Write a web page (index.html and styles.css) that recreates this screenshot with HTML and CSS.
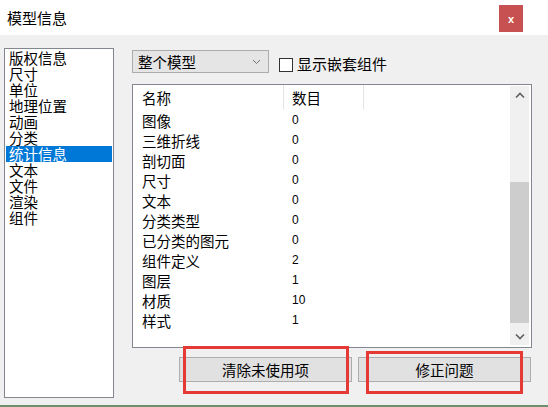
FILE: index.html
```html
<!DOCTYPE html>
<html>
<head>
<meta charset="utf-8">
<link rel="stylesheet" href="styles.css">
</head>
<body>
<div class="titlebar">
  <span class="title">模型信息</span>
  <span class="close">x</span>
</div>
<div class="main">
  <ul class="sidebar">
    <li>版权信息</li>
    <li>尺寸</li>
    <li>单位</li>
    <li>地理位置</li>
    <li>动画</li>
    <li>分类</li>
    <li class="selected">统计信息</li>
    <li>文本</li>
    <li>文件</li>
    <li>渲染</li>
    <li>组件</li>
  </ul>
  <div class="content">
    <div class="toolbar">
      <div class="select"><span>整个模型</span><svg class="chev" width="9" height="6" viewBox="0 0 9 6"><path d="M1 1l3.5 3.5L8 1" fill="none" stroke="#707070" stroke-width="1"/></svg></div>
      <span class="checkbox"></span>
      <span class="cblabel">显示嵌套组件</span>
    </div>
    <div class="listview">
      <div class="table">
        <div class="header"><span class="c1">名称</span><span class="c2">数目</span><span class="c3"></span></div>
        <div class="row"><span class="c1">图像</span><span class="c2 num">0</span></div>
        <div class="row"><span class="c1">三维折线</span><span class="c2 num">0</span></div>
        <div class="row"><span class="c1">剖切面</span><span class="c2 num">0</span></div>
        <div class="row"><span class="c1">尺寸</span><span class="c2 num">0</span></div>
        <div class="row"><span class="c1">文本</span><span class="c2 num">0</span></div>
        <div class="row"><span class="c1">分类类型</span><span class="c2 num">0</span></div>
        <div class="row"><span class="c1">已分类的图元</span><span class="c2 num">0</span></div>
        <div class="row"><span class="c1">组件定义</span><span class="c2 num">2</span></div>
        <div class="row"><span class="c1">图层</span><span class="c2 num">1</span></div>
        <div class="row"><span class="c1">材质</span><span class="c2 num">10</span></div>
        <div class="row"><span class="c1">样式</span><span class="c2 num">1</span></div>
      </div>
      <div class="scrollbar">
        <div class="sbtn"><svg width="10" height="6" viewBox="0 0 10 6"><path d="M1 5.5L5 1.5l4 4" fill="none" stroke="#606060" stroke-width="1.6"/></svg></div>
        <div class="track"><div class="thumb"></div></div>
        <div class="sbtn"><svg width="10" height="6" viewBox="0 0 10 6"><path d="M1 0.5L5 4.5l4-4" fill="none" stroke="#606060" stroke-width="1.6"/></svg></div>
      </div>
    </div>
    <div class="buttons">
      <div class="btn btn1">清除未使用项</div>
      <div class="btn btn2">修正问题</div>
    </div>
  </div>
</div>
<div class="mark mark1"></div>
<div class="mark mark2"></div>
<div class="bottomline"></div>
</body>
</html>
```
FILE: styles.css
```css
html, body {
  margin: 0;
  padding: 0;
}
body {
  width: 548px;
  height: 407px;
  background: #f0f0f0;
  font-family: "Noto Sans CJK SC", "Noto Sans", sans-serif;
  color: #000;
  display: flex;
  flex-direction: column;
  position: relative;
  overflow: hidden;
}
.titlebar {
  height: 35px;
  background: #fff;
  display: flex;
  align-items: center;
  justify-content: space-between;
  padding: 0 25px 0 7px;
  flex: none;
}
.title {
  font-size: 15px;
  line-height: 16px;
}
.close {
  width: 24px;
  height: 27px;
  background: #c75050;
  color: #fff;
  font-family: "Liberation Sans", sans-serif;
  font-size: 11px;
  font-weight: bold;
  display: flex;
  align-items: center;
  justify-content: center;
  margin-top: 2px;
}
.main {
  display: flex;
  padding: 13px 0 0 4px;
}
.sidebar {
  list-style: none;
  margin: 0;
  width: 106px;
  height: 346px;
  border: 1px solid #828790;
  background: #fff;
  padding: 1px;
  font-size: 14.5px;
}
.sidebar li {
  height: 16px;
  line-height: 16px;
  padding-left: 3px;
  white-space: nowrap;
}
.sidebar li.selected {
  background: #0078d7;
  color: #fff;
}
.content {
  margin-left: 18px;
  width: 400px;
  padding-top: 2px;
}
.toolbar {
  display: flex;
  align-items: center;
  height: 23px;
}
.select {
  height: 21px;
  border: 1px solid #acacac;
  background: #e5e5e5;
  display: flex;
  align-items: center;
  justify-content: space-between;
  padding: 0 7px 0 5px;
  box-sizing: content-box;
  width: 123px;
  font-size: 14.5px;
}
.checkbox {
  width: 12px;
  height: 12px;
  border: 1px solid #333;
  background: #fff;
  margin-left: 10px;
  margin-top: 6px;
}
.cblabel {
  margin-left: 4px;
  font-size: 15px;
  margin-top: 4px;
}
.listview {
  margin-top: 11px;
  height: 262px;
  border: 1px solid #828790;
  background: #fff;
  display: flex;
}
.table {
  flex: 1;
}
.header, .row {
  display: flex;
  align-items: center;
}
.header {
  height: 25px;
  font-size: 14.5px;
}
.header span {
  height: 25px;
  line-height: 25px;
  box-sizing: border-box;
  border-right: 1px solid #e5e5e5;
}
.header .c3 {
  border-right: none;
}
.c1 {
  width: 151px;
  padding-left: 9px;
  box-sizing: border-box;
  flex: none;
}
.c2 {
  width: 80px;
  padding-left: 8px;
  box-sizing: border-box;
  flex: none;
}
.row {
  height: 20px;
  font-size: 14.5px;
}
.num {
  font-family: "Liberation Sans", sans-serif;
  font-size: 12px;
}
.scrollbar {
  width: 19px;
  margin: 1px 2px 2px 0;
  background: #f0f0f0;
  display: flex;
  flex-direction: column;
}
.sbtn {
  height: 17px;
  display: flex;
  align-items: center;
  justify-content: center;
  flex: none;
}
.track {
  flex: 1;
  display: flex;
  flex-direction: column;
  justify-content: flex-end;
  padding-bottom: 5px;
}
.thumb {
  height: 141px;
  background: #cdcdcd;
}
.buttons {
  display: flex;
  margin-top: 9px;
}
.btn {
  height: 23px;
  width: 171px;
  border: 1px solid #adadad;
  background: #e1e1e1;
  font-size: 14.5px;
  display: flex;
  align-items: center;
  justify-content: center;
}
.btn1 {
  margin-left: 47px;
}
.btn2 {
  margin-left: 6px;
}
.mark {
  position: absolute;
  border: 3px solid #e53935;
  box-sizing: border-box;
}
.mark1 {
  left: 183px;
  top: 346px;
  width: 166px;
  height: 48px;
}
.mark2 {
  left: 366px;
  top: 351px;
  width: 157px;
  height: 43px;
}
.bottomline {
  margin-top: auto;
  height: 2px;
  background: #6d8f6d;
}
```
